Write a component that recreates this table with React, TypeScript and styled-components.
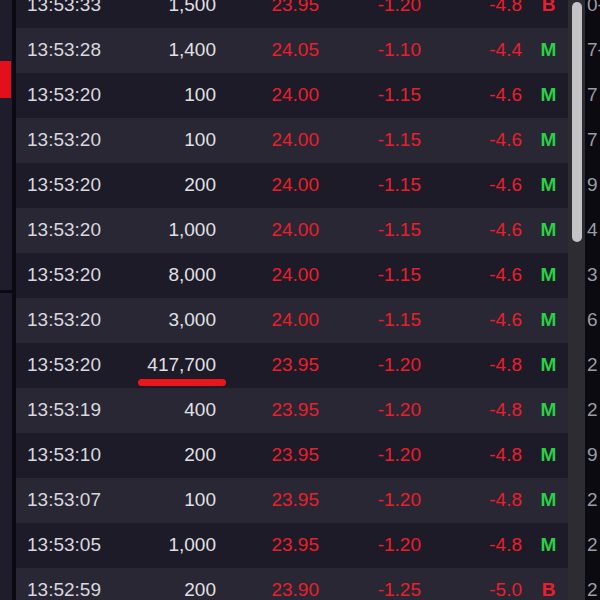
import React from "react";
import styled, { createGlobalStyle } from "styled-components";

const Global = createGlobalStyle`
  html, body { margin: 0; padding: 0; background: #1f1d2b; }
  body { font-family: "Liberation Sans", Arial, sans-serif; }
`;

const ROW_H = 45;
const OFFSET = -17;

type Row = { t: string; v: string; p: string; c: string; pct: string; f: "M" | "B"; mark?: boolean };

const rows: Row[] = [
  { t: "13:53:33", v: "1,500", p: "23.95", c: "-1.20", pct: "-4.8", f: "B" },
  { t: "13:53:28", v: "1,400", p: "24.05", c: "-1.10", pct: "-4.4", f: "M" },
  { t: "13:53:20", v: "100", p: "24.00", c: "-1.15", pct: "-4.6", f: "M" },
  { t: "13:53:20", v: "100", p: "24.00", c: "-1.15", pct: "-4.6", f: "M" },
  { t: "13:53:20", v: "200", p: "24.00", c: "-1.15", pct: "-4.6", f: "M" },
  { t: "13:53:20", v: "1,000", p: "24.00", c: "-1.15", pct: "-4.6", f: "M" },
  { t: "13:53:20", v: "8,000", p: "24.00", c: "-1.15", pct: "-4.6", f: "M" },
  { t: "13:53:20", v: "3,000", p: "24.00", c: "-1.15", pct: "-4.6", f: "M" },
  { t: "13:53:20", v: "417,700", p: "23.95", c: "-1.20", pct: "-4.8", f: "M", mark: true },
  { t: "13:53:19", v: "400", p: "23.95", c: "-1.20", pct: "-4.8", f: "M" },
  { t: "13:53:10", v: "200", p: "23.95", c: "-1.20", pct: "-4.8", f: "M" },
  { t: "13:53:07", v: "100", p: "23.95", c: "-1.20", pct: "-4.8", f: "M" },
  { t: "13:53:05", v: "1,000", p: "23.95", c: "-1.20", pct: "-4.8", f: "M" },
  { t: "13:52:59", v: "200", p: "23.90", c: "-1.25", pct: "-5.0", f: "B" },
];

const sideDigits = ["0-", "7-", "7", "7", "9", "4", "3", "6", "2", "2", "9", "2", "2", "2"];

const Screen = styled.div`
  width: 600px;
  height: 600px;
  overflow: hidden;
  display: flex;
  background: #1f1d2b;
`;

const LeftPanel = styled.div`
  width: 12px;
  flex: none;
  display: flex;
  flex-direction: column;
  background: #1f1d2b;
`;

const LeftGap = styled.div<{ $h: number }>`
  height: ${(p) => p.$h}px;
  flex: none;
`;

const RedTab = styled.div`
  height: 37px;
  width: 11px;
  background: #e3101c;
  flex: none;
`;

const HLine = styled.div`
  height: 3px;
  background: #0b0a12;
  flex: none;
`;

const Divider = styled.div`
  width: 4px;
  flex: none;
  background: #0b0a12;
`;

const Table = styled.div`
  width: 552px;
  flex: none;
  display: flex;
  flex-direction: column;
  margin-top: ${OFFSET}px;
  background: #282733;
`;

const RowEl = styled.div<{ $dark: boolean }>`
  height: ${ROW_H}px;
  box-sizing: border-box;
  padding-bottom: 2px;
  flex: none;
  display: grid;
  grid-template-columns: 120px 80px 103px 102px 101px 1fr;
  align-items: center;
  background: ${(p) => (p.$dark ? "#1c1b27" : "#282733")};
  font-size: 19px;
  line-height: 1;
`;

const Time = styled.div`
  padding-left: 11px;
  color: #d8d8de;
`;

const Num = styled.div<{ $red?: boolean }>`
  position: relative;
  text-align: right;
  color: ${(p) => (p.$red ? "#ec1e2c" : "#e0e0e4")};
`;

const Underline = styled.span`
  position: absolute;
  left: 2px;
  width: 88px;
  top: 24px;
  height: 7px;
  border-radius: 4px;
  background: #ea161e;
`;

const Flag = styled.div<{ $f: "M" | "B" }>`
  padding-left: 7px;
  text-align: center;
  font-weight: 700;
  color: ${(p) => (p.$f === "M" ? "#2ad146" : "#ec1e2c")};
`;

const Track = styled.div`
  width: 17px;
  flex: none;
  background: #2d2c33;
  padding: 2px 3px 0 4px;
  box-sizing: border-box;
`;

const Thumb = styled.div`
  height: 240px;
  border-radius: 5px;
  background: #c4c4c6;
`;

const RightPanel = styled.div`
  flex: 1;
  background: #0b0a10;
  display: flex;
  flex-direction: column;
  margin-top: ${OFFSET}px;
`;

const SideCell = styled.div`
  height: ${ROW_H}px;
  box-sizing: border-box;
  padding-bottom: 2px;
  flex: none;
  display: flex;
  align-items: center;
  padding-left: 2px;
  font-size: 19px;
  line-height: 1;
  color: #9c9ca4;
  white-space: nowrap;
`;

export default function App() {
  return (
    <>
      <Global />
      <Screen>
        <LeftPanel>
          <LeftGap $h={61} />
          <RedTab />
          <LeftGap $h={192} />
          <HLine />
        </LeftPanel>
        <Divider />
        <Table>
          {rows.map((r, i) => (
            <RowEl key={i} $dark={i % 2 === 0}>
              <Time>{r.t}</Time>
              <Num>
                {r.v}
                {r.mark && <Underline />}
              </Num>
              <Num $red>{r.p}</Num>
              <Num $red>{r.c}</Num>
              <Num $red>{r.pct}</Num>
              <Flag $f={r.f}>{r.f}</Flag>
            </RowEl>
          ))}
        </Table>
        <Track>
          <Thumb />
        </Track>
        <RightPanel>
          {sideDigits.map((d, i) => (
            <SideCell key={i}>{d}</SideCell>
          ))}
        </RightPanel>
      </Screen>
    </>
  );
}
